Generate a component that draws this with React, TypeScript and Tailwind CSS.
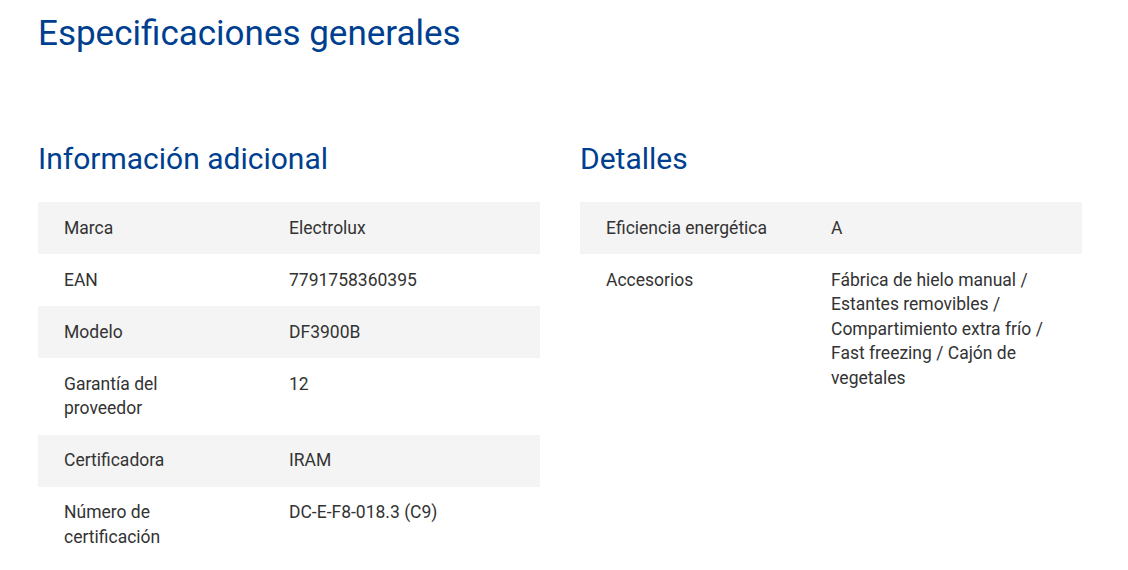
import React from 'react';

type Spec = { label: string; value: string };

const info: Spec[] = [
  { label: 'Marca', value: 'Electrolux' },
  { label: 'EAN', value: '7791758360395' },
  { label: 'Modelo', value: 'DF3900B' },
  { label: 'Garantía del proveedor', value: '12' },
  { label: 'Certificadora', value: 'IRAM' },
  { label: 'Número de certificación', value: 'DC-E-F8-018.3 (C9)' },
];

const details: Spec[] = [
  { label: 'Eficiencia energética', value: 'A' },
  {
    label: 'Accesorios',
    value: 'Fábrica de hielo manual / Estantes removibles / Compartimiento extra frío / Fast freezing / Cajón de vegetales',
  },
];

function SpecTable({ title, rows }: { title: string; rows: Spec[] }) {
  return (
    <div className="flex flex-col">
      <h3 className="text-[30px] leading-[36px] text-[#003f8f] font-normal">{title}</h3>
      <div className="mt-[25px]">
        {rows.map((r, i) => (
          <div
            key={r.label}
            className={`flex py-[13.75px] text-[17.5px] leading-[24.5px] text-[#333333] ${i % 2 === 0 ? 'bg-[#f4f4f4]' : 'bg-white'}`}
          >
            <div className="w-[251px] shrink-0 pl-[26px]">
              <div className="w-[168px]">{r.label}</div>
            </div>
            <div className="flex-1 pr-[25px]">{r.value}</div>
          </div>
        ))}
      </div>
    </div>
  );
}

export default function App() {
  return (
    <div className="min-h-screen bg-white px-[38px] pt-[13px]" style={{ fontFamily: 'Roboto, "Liberation Sans", sans-serif' }}>
      <h2 className="text-[35px] leading-[42px] text-[#003f8f] font-normal">Especificaciones generales</h2>
      <div className="mt-[86px] grid grid-cols-[502px_502px] gap-x-[40px]">
        <SpecTable title="Información adicional" rows={info} />
        <SpecTable title="Detalles" rows={details} />
      </div>
    </div>
  );
}
